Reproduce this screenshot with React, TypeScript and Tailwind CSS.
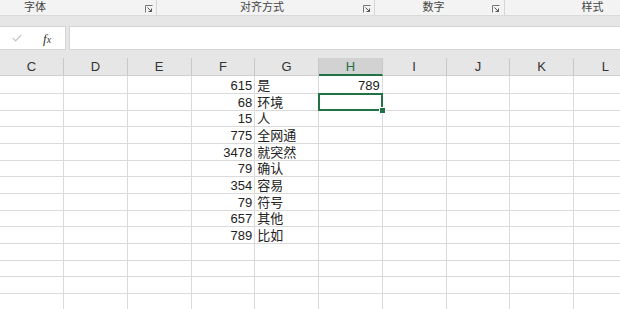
import React from "react";

const FONT = "font-['Liberation_Sans','Noto_Sans_CJK_SC',sans-serif]";

function Launcher() {
  return (
    <svg width="8" height="8" viewBox="0 0 8 8" className="block">
      <path d="M0.5 7.5 V0.5 H7.5" fill="none" stroke="#777" strokeWidth="1" />
      <path d="M2.5 2.5 L6.5 6.5" fill="none" stroke="#555" strokeWidth="1" />
      <path d="M3.5 6.5 H6.5 V3.5" fill="none" stroke="#555" strokeWidth="1" />
    </svg>
  );
}

const cols = ["C", "D", "E", "F", "G", "H", "I", "J", "K", "L"];
const fVals = ["615", "68", "15", "775", "3478", "79", "354", "79", "657", "789"];
const gVals = ["是", "环境", "人", "全网通", "就突然", "确认", "容易", "符号", "其他", "比如"];

function colWidth(i: number) {
  return i === 0 ? "w-[64px]" : "w-[63.75px]";
}

export default function App() {
  const rows = Array.from({ length: 15 }, (_, i) => i);
  return (
    <div className={`w-[620px] h-[309px] overflow-hidden bg-white ${FONT}`}>
      {/* ribbon group labels */}
      <div className="flex h-[16px] bg-[#f3f3f3] border-b border-[#dadada] text-[11px] text-[#444] leading-[15px]">
        <div className="w-[157px] shrink-0 flex items-start border-r border-[#d6d6d6] h-[15px]">
          <div className="w-[70px] text-center">字体</div>
          <div className="flex-1" />
          <div className="pt-[5px] pr-[3px]"><Launcher /></div>
        </div>
        <div className="w-[218px] shrink-0 flex items-start border-r border-[#d6d6d6] h-[15px]">
          <div className="flex-1 text-center pl-[4px]">对齐方式</div>
          <div className="pt-[5px] pr-[3px]"><Launcher /></div>
        </div>
        <div className="w-[130px] shrink-0 flex items-start border-r border-[#d6d6d6] h-[15px]">
          <div className="flex-1 text-center">数字</div>
          <div className="pt-[5px] pr-[4px]"><Launcher /></div>
        </div>
        <div className="flex-1 flex items-start h-[15px]">
          <div className="w-[175px] text-center">样式</div>
        </div>
      </div>
      {/* band */}
      <div className="h-[10px] bg-[#e6e6e6]" />
      {/* formula bar */}
      <div className="flex h-[24px] bg-[#e6e6e6]">
        <div className="w-[66px] shrink-0 bg-white border border-l-0 border-[#d4d4d4] flex items-center">
          <svg width="10" height="8" viewBox="0 0 10 8" className="ml-[12px]">
            <path d="M0.8 4.2 L3.6 7 L9.2 0.8" fill="none" stroke="#c2c2c2" strokeWidth="1.2" />
          </svg>
          <span className="ml-[21px] font-['Liberation_Serif',serif] italic text-[13px] text-[#333] leading-none">
            f<span className="text-[10px]">x</span>
          </span>
        </div>
        <div className="w-[3px] shrink-0" />
        <div className="flex-1 bg-white border border-r-0 border-[#d4d4d4]" />
      </div>
      {/* band */}
      <div className="h-[8px] bg-[#e6e6e6]" />
      {/* column headers */}
      <div className="flex h-[18px]">
        {cols.map((c, i) => {
          const sel = c === "H";
          return (
            <div
              key={c}
              className={`${colWidth(i)} shrink-0 h-[18px] flex items-center justify-center pt-[1px] text-[13px] border-r border-[#c8c8c8] ${
                sel
                  ? "bg-[#d2d2d2] text-[#217346] border-b-2 border-b-[#217346]"
                  : "bg-[#e6e6e6] text-[#333] border-b border-b-[#d0d0d0]"
              }`}
            >
              {c}
            </div>
          );
        })}
      </div>
      {/* grid rows */}
      {rows.map((r) => (
        <div key={r} className={`flex ${r === 0 ? "h-[18px]" : "h-[16.67px]"}`}>
          {cols.map((c, i) => {
            let content: React.ReactNode = null;
            let align = "justify-end pr-[2px]";
            if (c === "F" && r < fVals.length) content = fVals[r];
            if (c === "G" && r < gVals.length) {
              content = gVals[r];
              align = "justify-start pl-[2px]";
            }
            if (c === "H" && r === 0) content = "789";
            const selected = c === "H" && r === 1;
            return (
              <div
                key={c}
                className={`${colWidth(i)} shrink-0 h-full relative flex items-end ${align} border-r border-b border-[#dadada] text-[13px] text-[#222] leading-[15px]`}
              >
                {content}
                {selected && (
                  <>
                    <div className="absolute z-10 left-[-1px] top-[-1px] right-[-1px] bottom-[-1px] border-2 border-[#217346]" />
                    <div className="absolute z-20 right-[-4px] bottom-[-4px] w-[7px] h-[7px] bg-[#217346] border border-white" />
                  </>
                )}
              </div>
            );
          })}
        </div>
      ))}
    </div>
  );
}
